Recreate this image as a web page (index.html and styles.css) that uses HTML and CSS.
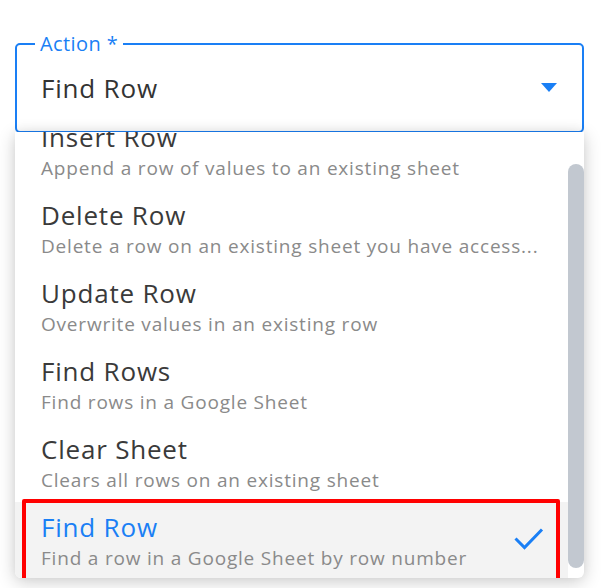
FILE: index.html
```html
<!DOCTYPE html>
<html>
<head>
<meta charset="utf-8">
<link rel="stylesheet" href="styles.css">
</head>
<body>
<div class="field">
  <fieldset class="select">
    <legend class="label">Action *</legend>
    <div class="value">Find Row</div>
    <svg class="arrow" width="16" height="9" viewBox="0 0 16 9"><path d="M0 0 H16 L8 9 Z" fill="#1a7ff5"/></svg>
  </fieldset>
  <div class="menu">
    <ul class="list">
      <li class="item"><div class="title">Insert Row</div><div class="desc">Append a row of values to an existing sheet</div></li>
      <li class="item"><div class="title">Delete Row</div><div class="desc">Delete a row on an existing sheet you have access...</div></li>
      <li class="item"><div class="title">Update Row</div><div class="desc">Overwrite values in an existing row</div></li>
      <li class="item"><div class="title">Find Rows</div><div class="desc">Find rows in a Google Sheet</div></li>
      <li class="item"><div class="title">Clear Sheet</div><div class="desc">Clears all rows on an existing sheet</div></li>
      <li class="item selected">
        <div class="text"><div class="title">Find Row</div><div class="desc">Find a row in a Google Sheet by row number</div></div>
        <svg class="check" width="30" height="23" viewBox="0 0 30 23"><path d="M1.5 11.5 L10.5 20.5 L28 2.5" fill="none" stroke="#1a7ff5" stroke-width="3"/></svg>
        <div class="annot"></div>
      </li>
    </ul>
    <div class="track"><div class="thumb"></div></div>
  </div>
</div>
</body>
</html>
```

FILE: styles.css
```css
html, body {
  margin: 0;
  padding: 0;
  background: #fff;
}
body {
  font-family: "Open Sans", "Noto Sans", sans-serif;
  width: 603px;
  height: 588px;
  overflow: hidden;
}
.field {
  position: relative;
  margin: 33px 19px 0 15px;
}
.select {
  margin: 0;
  padding: 16px 25px 0 24px;
  height: 80px;
  border: 2px solid #1a7ff5;
  border-radius: 5px;
  display: flex;
  align-items: flex-start;
  justify-content: space-between;
  box-sizing: content-box;
}
.label {
  color: #1a7ff5;
  font-size: 20px;
  line-height: 22px;
  padding: 0 5px;
  margin-left: -6px;
  letter-spacing: 0.4px;
}
.value {
  font-size: 26px;
  line-height: 34px;
  color: #333;
  letter-spacing: 0.8px;
}
.arrow {
  margin-top: 12px;
}
.menu {
  position: absolute;
  left: 0;
  right: 0;
  top: 99px;
  height: 446px;
  background: #fff;
  border-radius: 0 0 6px 6px;
  box-shadow: 0 4px 18px rgba(0,0,0,0.2), 0 -2px 10px rgba(0,0,0,0.05);
  overflow: hidden;
  display: flex;
}
.list {
  list-style: none;
  margin: -20px 0 0 0;
  padding: 0;
  flex: 1;
}
.item {
  height: 78px;
  box-sizing: border-box;
  padding: 8px 26px 0 26px;
  position: relative;
}
.title {
  font-size: 26px;
  line-height: 34px;
  color: #3a3a3a;
  letter-spacing: 0.8px;
}
.desc {
  font-size: 19px;
  line-height: 28px;
  color: #8a8a8a;
  letter-spacing: 0.8px;
  white-space: nowrap;
}
.selected {
  background: #f3f3f3;
  display: flex;
  align-items: flex-start;
  justify-content: space-between;
  padding-right: 24px;
}
.selected .title {
  color: #1a7ff5;
}
.check {
  margin-top: 17px;
}
.annot {
  position: absolute;
  left: 7px;
  right: 8px;
  top: -3px;
  bottom: -6px;
  border: 4.5px solid #ff0000;
  border-radius: 2px;
}
.track {
  width: 16px;
  padding-top: 32px;
  padding-bottom: 10px;
  display: flex;
}
.thumb {
  width: 15px;
  flex: 1;
  background: #c2c8d0;
  border-radius: 8px;
}
```
